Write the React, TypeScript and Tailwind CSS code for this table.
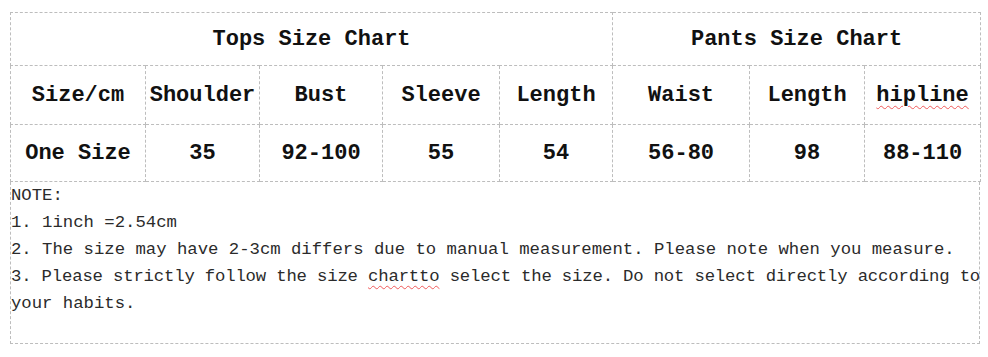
import React from "react";

const tops = [
    { label: "Shoulder", value: "35" },
    { label: "Bust", value: "92-100" },
    { label: "Sleeve", value: "55" },
    { label: "Length", value: "54" },
];

const pants = [
    { label: "Waist", value: "56-80" },
    { label: "Length", value: "98" },
    { label: "hipline", value: "88-110", squiggle: true },
];

const colWidths = [135, 114, 123, 117, 113, 137, 115, 116];

const cell = "border border-dashed border-[#bdbdbd] text-center p-0";

const App: React.FC = () => {
    return (
        <div className="min-h-screen bg-white pl-[10px] pt-[12px]">
            <div className="w-[970px] font-['Liberation_Mono',monospace] text-[#111]">
                <table className="w-[970px] table-fixed border-collapse text-[22px] font-bold">
                    <colgroup>
                        {colWidths.map((w, i) => (
                            <col key={i} style={{ width: w }} />
                        ))}
                    </colgroup>
                    <tbody>
                    <tr className="h-[53px]">
                        <td colSpan={5} className={cell}>Tops Size Chart</td>
                        <td colSpan={3} className={cell}>Pants Size Chart</td>
                    </tr>
                    <tr className="h-[59px]">
                        <td className={cell}>Size/cm</td>
                        {tops.map((t) => (
                            <td key={t.label} className={cell}>{t.label}</td>
                        ))}
                        {pants.map((p) => (
                            <td key={p.label} className={cell}>
                                {p.squiggle ? (
                                    <span className="underline decoration-wavy decoration-[#f05a5a] decoration-1 underline-offset-4">
                                        {p.label}
                                    </span>
                                ) : (
                                    p.label
                                )}
                            </td>
                        ))}
                    </tr>
                    <tr className="h-[57px]">
                        <td className={cell}>One Size</td>
                        {tops.map((t) => (
                            <td key={t.label} className={cell}>{t.value}</td>
                        ))}
                        {pants.map((p) => (
                            <td key={p.label} className={cell}>{p.value}</td>
                        ))}
                    </tr>
                    </tbody>
                </table>

                {/* notes */}
                <div className="h-[162px] border-x border-b border-dashed border-[#bdbdbd] text-[17.3px] leading-[27px] text-[#2b2b2b] whitespace-nowrap">
                    <div>NOTE:</div>
                    <div>1. 1inch =2.54cm</div>
                    <div>2. The size may have 2-3cm differs due to manual measurement. Please note when you measure.</div>
                    <div className="tracking-[-0.17px]">
                        3. Please strictly follow the size{" "}
                        <span className="underline decoration-wavy decoration-[#f05a5a] decoration-1 underline-offset-4">chartto</span>{" "}
                        select the size. Do not select directly according to
                    </div>
                    <div>your habits.</div>
                </div>
            </div>
        </div>
    );
};

export default App;
